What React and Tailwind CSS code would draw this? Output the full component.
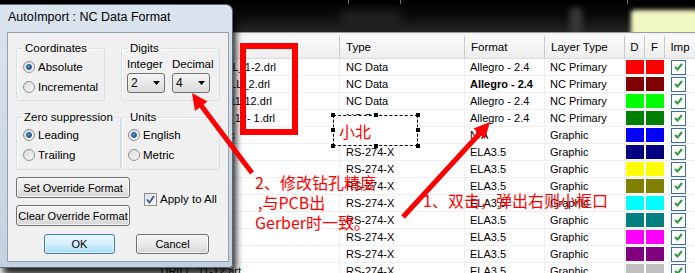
import React from "react";

const rows = [
  { name: "NC_DRILL_1-2.drl", pr: "pr-[63px]", type: "NC Data", fmt: "Allegro - 2.4", layer: "NC Primary", c: "bg-[#ff0000]" },
  { name: "NC_DRILL_2.drl", pr: "pr-[69px]", type: "NC Data", fmt: "Allegro - 2.4", bold: true, layer: "NC Primary", c: "bg-[#800000]" },
  { name: "NC_DRILL_11-12.drl", pr: "pr-[67px]", type: "NC Data", fmt: "Allegro - 2.4", layer: "NC Primary", c: "bg-[#00ff00]" },
  { name: "NC_DRILL_12- 1.drl", pr: "pr-[64px]", type: "NC Data", fmt: "Allegro - 2.4", layer: "NC Primary", c: "bg-[#008000]" },
  { name: "SOLDERMASK_TOP.gbc", pr: "pr-[104px]", type: "RS-274-X", fmt: "N/A", layer: "Graphic", c: "bg-[#0000ff]" },
  { name: "ART_TOP.art", pr: "pr-[120px]", type: "RS-274-X", fmt: "ELA3.5", layer: "Graphic", c: "bg-[#000080]" },
  { name: "ART_GND.art", pr: "pr-[120px]", type: "RS-274-X", fmt: "ELA3.5", layer: "Graphic", c: "bg-[#ffff00]" },
  { name: "ART_PWR.art", pr: "pr-[120px]", type: "RS-274-X", fmt: "ELA3.5", layer: "Graphic", c: "bg-[#808000]" },
  { name: "ART_BOT.art", pr: "pr-[120px]", type: "RS-274-X", fmt: "ELA3.5", layer: "Graphic", c: "bg-[#00ffff]" },
  { name: "SILK_TOP.art", pr: "pr-[120px]", type: "RS-274-X", fmt: "ELA3.5", layer: "Graphic", c: "bg-[#008080]" },
  { name: "SILK_BOT.art", pr: "pr-[120px]", type: "RS-274-X", fmt: "ELA3.5", layer: "Graphic", c: "bg-[#ff00ff]" },
  { name: "PASTE_TOP.art", pr: "pr-[120px]", type: "RS-274-X", fmt: "ELA3.5", layer: "Graphic", c: "bg-[#800080]" },
  { name: "DRILL_11-12.art", pr: "pr-[98px]", type: "RS-274-X", fmt: "ELA3.5", layer: "Graphic", c: "bg-[#c0c0c0]" },
];

function ImpBox() {
  return (
    <div className="w-[15px] h-[15px] border border-[#3a6fa8] bg-white flex items-start justify-center">
      <svg width="11" height="10" viewBox="0 0 11 10" className="mt-[1px]">
        <path d="M2 5 L4.5 7.5 L9 2" fill="none" stroke="#2e9b36" strokeWidth="2" />
      </svg>
    </div>
  );
}

function Row({ r }) {
  return (
    <div className="flex h-[17px] border-b border-[#efefef] text-[11px] leading-[17px] text-black">
      <div className={`w-[340px] shrink-0 border-r border-[#efefef] flex justify-end whitespace-pre overflow-hidden ${r.pr}`}>{r.name}</div>
      <div className="w-[125px] shrink-0 border-r border-[#efefef] pl-[6px] whitespace-nowrap">{r.type}</div>
      <div className={`w-[80px] shrink-0 border-r border-[#efefef] pl-[5px] whitespace-nowrap ${r.bold ? "font-bold" : ""}`}>{r.fmt}</div>
      <div className="w-[80px] shrink-0 border-r border-[#efefef] pl-[5px] whitespace-nowrap">{r.layer}</div>
      <div className="w-[20px] shrink-0 px-[1px] py-[1px]"><div className={`h-full ${r.c}`} /></div>
      <div className="w-[20px] shrink-0 px-[1px] py-[1px]"><div className={`h-full ${r.c}`} /></div>
      <div className="w-[30px] shrink-0 pl-[6px] flex items-center"><ImpBox /></div>
    </div>
  );
}

function Radio({ on, label }) {
  return (
    <div className="flex items-center h-[14px] gap-[3px]">
      <div className="w-[12px] h-[12px] rounded-full border border-[#8e8f8f] bg-linear-to-br from-[#d8d8d8] to-[#fbfbfb] flex items-center justify-center">
        {on && <div className="w-[6px] h-[6px] rounded-full border border-[#1c4f80] bg-linear-to-br from-[#5fb3ea] to-[#0d4d8c]" />}
      </div>
      <span className="whitespace-nowrap">{label}</span>
    </div>
  );
}

function Combo({ v }) {
  return (
    <div className="h-[20px] mt-[2px] border border-[#707070] rounded-[3px] bg-linear-to-b from-[#f4f4f4] to-[#dcdcdc] flex items-center justify-between pl-[3px] pr-[4px] text-[12px]">
      <span>{v}</span>
      <svg width="7" height="4" viewBox="0 0 7 4"><polygon points="0,0 7,0 3.5,4" fill="#000" /></svg>
    </div>
  );
}

function Btn({ children, w, def }) {
  return (
    <div
      className={`${w} flex items-center justify-center whitespace-nowrap rounded-[3px] border text-[11px] ${
        def
          ? "border-[#3c7fb1] bg-linear-to-b from-[#eaf6fd] via-[#d5eefc] to-[#a9daf5] shadow-[inset_0_0_0_1px_rgba(255,255,255,0.6)]"
          : "border-[#707070] bg-linear-to-b from-[#f3f3f3] via-[#ebebeb] to-[#d4d4d4] shadow-[inset_0_0_0_1px_rgba(255,255,255,0.7)]"
      }`}
    >
      {children}
    </div>
  );
}

export default function App() {
  return (
    <div className="relative w-[695px] h-[273px] overflow-hidden bg-white font-['Liberation_Sans',Arial,sans-serif] text-black">
      {/* top dark strip */}
      <div className="flex h-[4px] bg-black">
        <div className="w-[348px]" />
        <div className="w-px bg-[#6e6e6e]" />
        <div className="w-[51px]" />
        <div className="w-px bg-[#6e6e6e]" />
        <div className="w-[226px]" />
        <div className="w-px bg-[#6e6e6e]" />
      </div>
      <div className="flex h-[28px] overflow-hidden bg-linear-to-b from-[#030303] via-[#0e0e0e] to-[#262626]">
        <div className="ml-[340px] mt-[6px] w-[60px] h-[26px] bg-[#1f1f1f] blur-[4px]" />
        <div className="ml-[170px] mt-[4px] w-[12px] h-[26px] bg-[#3a3a3a] blur-[3px]" />
        <div className="ml-auto mt-[6px] w-[68px] h-[30px] translate-x-[4px] rounded-[4px] bg-[#f2f8c2] blur-[2px]" />
      </div>
      <div className="h-[1px] bg-[#9a9a9a]" />
      <div className="h-[3px] bg-[#f5f5f5]" />
      {/* header */}
      <div className="flex h-[23px] bg-linear-to-b from-[#fbfbfb] to-[#ededed] border-b border-[#dcdcdc] text-[11.5px] leading-[23px]">
        <div className="w-[340px] shrink-0 border-r border-[#c8c8c8]" />
        <div className="w-[125px] shrink-0 border-r border-[#c8c8c8] pl-[6px]">Type</div>
        <div className="w-[80px] shrink-0 border-r border-[#c8c8c8] pl-[6px]">Format</div>
        <div className="w-[80px] shrink-0 border-r border-[#c8c8c8] pl-[6px]">Layer Type</div>
        <div className="w-[20px] shrink-0 border-r border-[#c8c8c8] text-center">D</div>
        <div className="w-[20px] shrink-0 border-r border-[#c8c8c8] text-center">F</div>
        <div className="w-[30px] shrink-0 text-center">Imp</div>
      </div>
      {rows.map((r, i) => (
        <Row key={i} r={r} />
      ))}

      {/* dialog */}
      <div className="absolute left-0 top-[4px] w-[233px] h-[264px] rounded-tr-[7px] rounded-br-[4px] border border-l-0 border-[#5b6572] bg-linear-to-b from-[#dbe4ee] via-[#cfdae7] to-[#c3d1e0] shadow-[3px_7px_7px_rgba(0,0,0,0.85)] flex flex-col">
        <div className="h-[27px] pl-[8px] pt-[5px] text-[12.5px] leading-[14px] whitespace-nowrap">AutoImport : NC Data Format</div>
        <div className="ml-[7px] mr-[3px] h-[230px] border border-[#93a0ae] bg-[#f0f0f0] text-[11px] leading-[14px] px-[8px] pt-[8px]">
          <div className="grid grid-cols-[88px_99px] gap-x-[17px] gap-y-[9px]">
            <fieldset className="h-[60px] border border-[#d5dfe5] rounded-[3px] px-[6px] shadow-[inset_1px_1px_0_#fff]">
              <legend className="px-[2px] leading-[14px] text-[11.5px]">Coordinates</legend>
              <div className="flex flex-col gap-[6px] pt-[5px] text-[11.5px]">
                <Radio on label="Absolute" />
                <Radio label="Incremental" />
              </div>
            </fieldset>
            <fieldset className="h-[60px] border border-[#d5dfe5] rounded-[3px] px-[5px] shadow-[inset_1px_1px_0_#fff]">
              <legend className="ml-[1px] px-[2px] leading-[14px] text-[11.5px]">Digits</legend>
              <div className="grid grid-cols-[38px_38px] gap-x-[7px] pt-[2px] text-[11.5px]">
                <span>Integer</span>
                <span>Decimal</span>
                <Combo v="2" />
                <Combo v="4" />
              </div>
            </fieldset>
            <fieldset className="h-[60px] border border-[#d5dfe5] rounded-[3px] px-[6px] shadow-[inset_1px_1px_0_#fff]">
              <legend className="px-[1px] leading-[14px] whitespace-nowrap text-[11.5px]">Zero suppression</legend>
              <div className="flex flex-col gap-[6px] pt-[4px] text-[11.5px]">
                <Radio on label="Leading" />
                <Radio label="Trailing" />
              </div>
            </fieldset>
            <fieldset className="h-[60px] border border-[#d5dfe5] rounded-[3px] px-[6px] shadow-[inset_1px_1px_0_#fff]">
              <legend className="px-[2px] leading-[14px] text-[11.5px]">Units</legend>
              <div className="flex flex-col gap-[6px] pt-[4px] text-[11.5px]">
                <Radio on label="English" />
                <Radio label="Metric" />
              </div>
            </fieldset>
          </div>
          <div className="flex items-center mt-[7px]">
            <div className="flex flex-col gap-[7px]">
              <div className="h-[21px] flex"><Btn w="w-[114px]">Set Override Format</Btn></div>
              <div className="h-[21px] flex"><Btn w="w-[114px]">Clear Override Format</Btn></div>
            </div>
            <div className="ml-[14px] mb-[5px] flex items-center gap-[3px] text-[11.5px]">
              <div className="w-[13px] h-[13px] border border-[#8e8f8f] bg-linear-to-br from-[#dfe3e8] to-[#f8f8f8] flex items-center justify-center">
                <svg width="9" height="9" viewBox="0 0 9 9">
                  <path d="M1 4.5 L3.5 7.5 L8 1" fill="none" stroke="#3f568f" strokeWidth="1.8" />
                </svg>
              </div>
              <span className="whitespace-nowrap">Apply to All</span>
            </div>
          </div>
          <div className="flex mt-[8px] pl-[28px] gap-[21px] h-[20px] text-[11.5px]">
            <Btn w="w-[71px]" def>OK</Btn>
            <Btn w="w-[73px]">Cancel</Btn>
          </div>
        </div>
      </div>

      {/* annotations */}
      <div className="absolute left-[240px] top-[43px] w-[58px] h-[92px] border-[6px] border-[#ff0000]" />

      <div className="absolute left-[333px] top-[115px] w-[85px] h-[31px] border border-dashed border-black bg-white flex items-center pl-[5px]">
        <span className="text-[16px] leading-[20px] text-[#ff0000] font-['Noto_Sans_CJK_SC',sans-serif]">小北</span>
        <div className="absolute -left-[3px] -top-[3px] w-[4px] h-[4px] bg-black" />
        <div className="absolute left-[40px] -top-[3px] w-[4px] h-[4px] bg-black" />
        <div className="absolute -right-[3px] -top-[3px] w-[4px] h-[4px] bg-black" />
        <div className="absolute -left-[3px] top-[12px] w-[4px] h-[4px] bg-black" />
        <div className="absolute -right-[3px] top-[12px] w-[4px] h-[4px] bg-black" />
        <div className="absolute -left-[3px] -bottom-[3px] w-[4px] h-[4px] bg-black" />
        <div className="absolute left-[40px] -bottom-[3px] w-[4px] h-[4px] bg-black" />
        <div className="absolute -right-[3px] -bottom-[3px] w-[4px] h-[4px] bg-black" />
      </div>

      <svg className="absolute inset-0 pointer-events-none" width="695" height="273" viewBox="0 0 695 273">
        <line x1="252" y1="173" x2="200" y2="104" stroke="#ff0000" strokeWidth="5" />
        <polygon points="192,93 207.5,101.5 195,111" fill="#ff0000" />
        <line x1="403" y1="217" x2="482" y2="131" stroke="#ff0000" strokeWidth="5" />
        <polygon points="490,122 485,139 473.5,128.5" fill="#ff0000" />
      </svg>

      <div className="absolute left-[255px] top-[172px] text-[16px] leading-[20px] text-[#ff0000] font-['Noto_Sans_CJK_SC',sans-serif] whitespace-nowrap">
        <div>2、修改钻孔精度</div>
        <div className="pl-[3px]">,与PCB出</div>
        <div>Gerber时一致。</div>
      </div>
      <div className="absolute left-[423px] top-[190px] text-[16px] leading-[20px] text-[#ff0000] font-['Noto_Sans_CJK_SC',sans-serif] whitespace-nowrap">
        1、双击，弹出右则小框口
      </div>
    </div>
  );
}
